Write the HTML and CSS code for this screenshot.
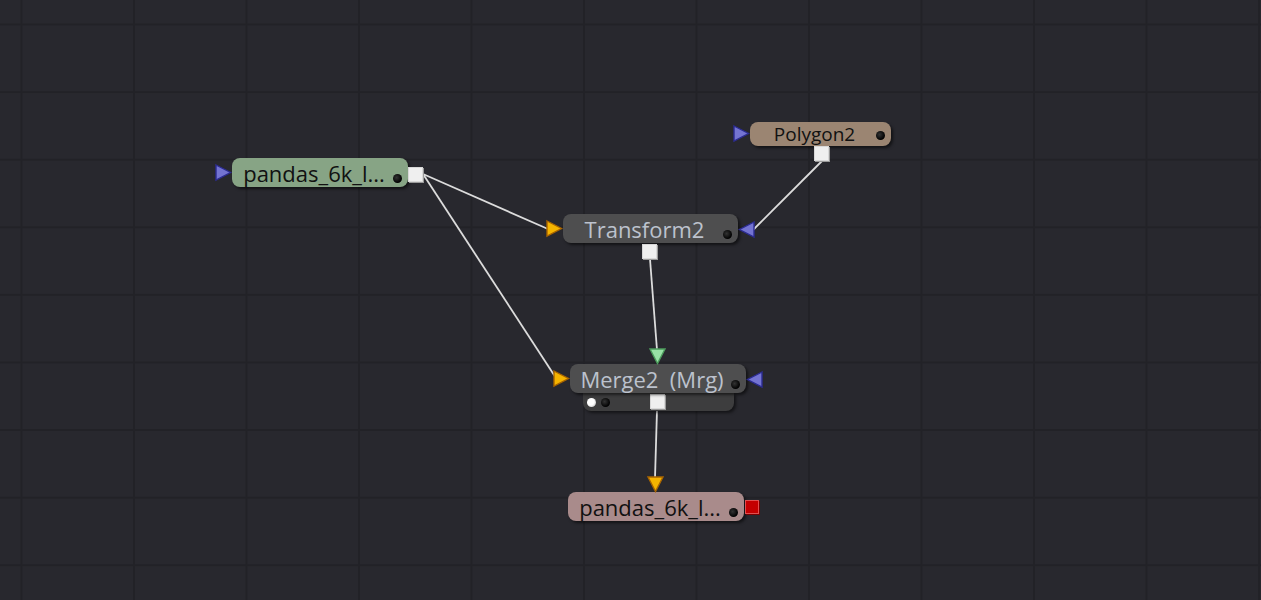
FILE: index.html
```html
<!doctype html>
<html>
    <head>
        <meta charset="utf-8">
        <title>Flow</title>
        <link rel="stylesheet" href="styles.css">
    </head>
    <body>
        <div class="flow">
            <svg class="wires" width="1261" height="600">
                <line x1="423" y1="174" x2="548" y2="229" />
                <line x1="423" y1="174" x2="556" y2="378" />
                <line x1="822" y1="161" x2="753" y2="230" />
                <line x1="650" y1="259" x2="657" y2="350" />
                <line x1="657" y1="410" x2="655" y2="478" />
            </svg>

            <!-- loader -->
            <div class="node green n-loader">
                <span class="label">pandas_6k_l...</span>
                <span class="dot"></span>
                <svg class="port in-left" width="17" height="17"><polygon class="blue" points="1,1 15.5,8.5 1,16" /></svg>
                <span class="out"></span>
            </div>

            <!-- polygon -->
            <div class="node brown small n-poly">
                <span class="label">Polygon2</span>
                <span class="dot"></span>
                <svg class="port in-left" width="17" height="17"><polygon class="blue" points="1,1 15.5,8.5 1,16" /></svg>
                <span class="out"></span>
            </div>

            <!-- transform -->
            <div class="node gray n-xf">
                <span class="label">Transform2</span>
                <span class="dot"></span>
                <svg class="port in-left" width="17" height="17"><polygon class="yellow" points="1,1 15.5,8.5 1,16" /></svg>
                <svg class="port in-right" width="17" height="17"><polygon class="blue" points="16,1 1.5,8.5 16,16" /></svg>
                <span class="out"></span>
            </div>

            <!-- merge -->
            <div class="merge n-merge">
                <div class="node gray">
                    <span class="label">Merge2&nbsp; (Mrg)</span>
                    <span class="dot"></span>
                    <svg class="port in-top" width="17" height="17"><polygon class="green" points="1,1 16,1 8.5,15.5" /></svg>
                    <svg class="port in-left" width="17" height="17"><polygon class="yellow" points="1,1 15.5,8.5 1,16" /></svg>
                    <svg class="port in-right" width="17" height="17"><polygon class="blue" points="16,1 1.5,8.5 16,16" /></svg>
                </div>
                <div class="tray">
                    <span class="pip white"></span>
                    <span class="pip"></span>
                    <span class="out"></span>
                </div>
            </div>

            <!-- saver -->
            <div class="node pink n-saver">
                <span class="label">pandas_6k_l...</span>
                <span class="dot"></span>
                <svg class="port in-top" width="17" height="17"><polygon class="yellow" points="1,1 16,1 8.5,15.5" /></svg>
                <span class="view"></span>
            </div>
        </div>
    </body>
</html>
```

FILE: styles.css
```css
body {
    margin: 0;
    background-color: #28282e;
    font-family: "Open Sans", "DejaVu Sans", sans-serif;
}
.flow {
    position: relative;
    width: 1261px;
    height: 600px;
    overflow: hidden;
    background-color: #28282e;
    background-image:
        linear-gradient(to right, #222227 0, #222227 2px, transparent 2px),
        linear-gradient(to bottom, #222227 0, #222227 2px, transparent 2px);
    background-size: 112.5px 67.6px;
    background-position: 20.5px 23.5px;
}
.wires {
    position: absolute;
    left: 0;
    top: 0;
}
.wires line {
    stroke: #dcdcdc;
    stroke-width: 1.8;
}

/* nodes */
.node {
    position: absolute;
    box-sizing: border-box;
    width: 176px;
    height: 29px;
    padding-right: 12px;
    border-radius: 8px;
    display: flex;
    align-items: center;
    justify-content: center;
    box-shadow: 2px 2px 3px rgba(0, 0, 0, 0.55);
    font-size: 22px;
    color: #111;
}
.node .label {
    white-space: nowrap;
    line-height: 1;
    margin-top: 1px;
}
.node.small {
    height: 24px;
    width: 141px;
    font-size: 19px;
}
.green { background-color: #87a485; }
.brown { background-color: #9b8572; }
.gray { background-color: #4e4e4f; color: #bcc2cd; }
.pink { background-color: #a98b8b; }

.dot {
    position: absolute;
    right: 6px;
    bottom: 4px;
    width: 9px;
    height: 9px;
    border-radius: 50%;
    background: radial-gradient(circle at 40% 40%, #333 0, #000 70%);
}
.small .dot {
    bottom: 6px;
    right: 6px;
}

/* ports */
.port {
    position: absolute;
    overflow: visible;
}
.port polygon {
    stroke-width: 1.4;
    stroke-linejoin: miter;
}
.port .blue { fill: #7474d2; stroke: #2c2c92; }
.port .yellow { fill: #f5b400; stroke: #a86400; }
.port .green { fill: #98e2a6; stroke: #4c9c5c; }
.in-left {
    left: -17px;
    top: 6px;
}
.small .in-left {
    top: 3px;
}
.in-right {
    right: -17px;
    top: 7px;
}
.in-top {
    left: 79px;
    top: -16px;
}
.out {
    position: absolute;
    width: 13px;
    height: 13px;
    background-color: #efefef;
    border: 1px solid #d8d8d8;
    box-shadow: 1px 1px 0 #9a9a9a;
}
.view {
    position: absolute;
    right: -15px;
    top: 8px;
    width: 12px;
    height: 12px;
    background-color: #c40000;
    border: 1px solid #e05050;
    box-shadow: 1px 1px 0 #700;
}

/* placements */
.n-loader { left: 232px; top: 158px; }
.n-loader .out { left: 176px; top: 9px; }

.n-poly { left: 750px; top: 122px; }
.n-poly .out { left: 64px; top: 24px; }

.n-xf { left: 563px; top: 214px; width: 175px; }
.n-xf .out { left: 79px; top: 30px; }

.merge {
    position: absolute;
    width: 176px;
}
.n-merge { left: 570px; top: 364px; }
.merge .node {
    position: relative;
    z-index: 1;
}
.tray {
    position: relative;
    box-sizing: border-box;
    margin: 0 12px 0 13px;
    height: 18px;
    padding: 0 0 0 4px;
    display: flex;
    align-items: center;
    gap: 5px;
    background-color: #3d3d3e;
    border-radius: 0 0 8px 8px;
    box-shadow: 2px 2px 3px rgba(0, 0, 0, 0.5);
}
.pip {
    width: 9px;
    height: 9px;
    border-radius: 50%;
    background: radial-gradient(circle at 40% 40%, #333 0, #000 70%);
}
.pip.white {
    background: radial-gradient(circle at 40% 40%, #fff 0, #fff 45%, #bbb 90%);
}
.tray .out {
    left: 67px;
    top: 1px;
}

.n-saver { left: 568px; top: 492px; }
.n-saver .in-top { left: 79px; }
```
